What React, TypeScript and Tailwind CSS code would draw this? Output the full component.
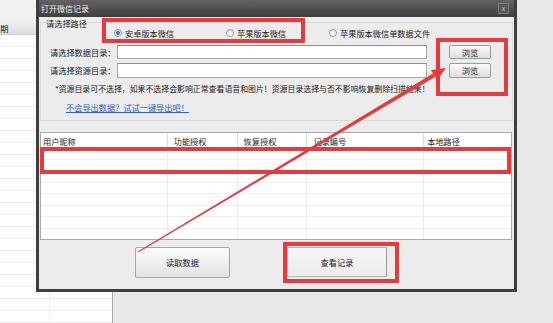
import React from "react";

const FONT = { fontFamily: '"Noto Sans CJK SC", "Noto Sans", sans-serif' };

const COLS = [
  { name: "用户昵称", w: 127, pl: 2 },
  { name: "功能授权", w: 70, pl: 6 },
  { name: "恢复授权", w: 70, pl: 6 },
  { name: "记录编号", w: 117, pl: 6 },
  { name: "本地路径", w: 87, pl: 3 },
];

const ROW_H = [12, 11, 12, 11, 12, 11, 12, 11];

function Radio({ checked, label, w }: { checked?: boolean; label: string; w?: number }) {
  return (
    <div className="flex items-center gap-[3px]" style={w ? { width: w } : undefined}>
      <span className="w-[8px] h-[8px] rounded-full border border-[#9a9a9a] bg-gradient-to-b from-[#e6e6e6] to-white flex items-center justify-center">
        {checked && <span className="w-[4px] h-[4px] rounded-full bg-[#3b6fc9]" />}
      </span>
      <span>{label}</span>
    </div>
  );
}

function BrowseBtn({ h }: { h: number }) {
  return (
    <div
      className="ml-[22px] w-[42px] flex items-center justify-center border border-[#9c9c9c] rounded-[2px] bg-gradient-to-b from-[#fbfbfb] to-[#dedede]"
      style={{ height: h }}
    >
      浏览
    </div>
  );
}

function BackWindow() {
  return (
    <div className="w-[113px] h-full bg-white border-r border-[#a8a8a8] flex flex-col">
      <div className="h-[23px] bg-[#f1f1f1]" />
      <div className="h-[15px] bg-gradient-to-b from-[#f0f0f0] to-[#dedede] border-b border-[#cfcfcf] flex items-center pt-[2px] text-[8.5px] text-[#222]">
        期
      </div>
      <div className="flex-1 flex flex-col">
        {Array.from({ length: 24 }).map((_, i) => (
          <div key={i} className="h-[12px] shrink-0 border-b border-[#ededed] flex">
            <div className="w-[50px] border-r border-[#eeeeee]" />
          </div>
        ))}
      </div>
    </div>
  );
}

function Annotations() {
  // arrow from "读取数据" up to the browse buttons
  const sx = 138, sy = 252, tx = 446, ty = 68;
  const dx = tx - sx, dy = ty - sy;
  const len = Math.hypot(dx, dy);
  const ux = dx / len, uy = dy / len;
  const nx = -uy, ny = ux;
  const bx = tx - 14 * ux, by = ty - 14 * uy;
  const shaft = [
    [sx + 0.5 * nx, sy + 0.5 * ny],
    [bx + 2 * nx, by + 2 * ny],
    [bx - 2 * nx, by - 2 * ny],
    [sx - 0.5 * nx, sy - 0.5 * ny],
  ];
  const head = [
    [tx, ty],
    [bx + 6 * nx, by + 6 * ny],
    [bx - 6 * nx, by - 6 * ny],
  ];
  const pts = (p: number[][]) => p.map((q) => q.join(",")).join(" ");
  return (
    <svg className="absolute inset-0 pointer-events-none" width="553" height="323">
      <g fill="none" stroke="#e53a3f" strokeWidth="4">
        <rect x="104" y="20" width="199" height="21" />
        <rect x="438" y="40" width="68" height="54" />
        <rect x="42" y="149" width="467" height="23" />
        <rect x="285" y="244" width="112" height="37" />
      </g>
      <polygon points={pts(shaft)} fill="#e53a3f" />
      <polygon points={pts(head)} fill="#e53a3f" />
    </svg>
  );
}

export default function App() {
  return (
    <div className="relative w-[553px] h-[323px] overflow-hidden bg-[#e8e8e8] text-[8.2px] text-[#222] leading-none" style={FONT}>
      <BackWindow />

      {/* dialog */}
      <div className="absolute left-[36px] top-0 w-[481px] h-[292px] bg-[#3e3e3e] flex flex-col px-[3px] pb-[3px]">
        <div className="h-[17px] shrink-0 bg-gradient-to-b from-[#626262] to-[#3e3e3e] flex items-center justify-between pl-[2px] pr-[5px]">
          <span className="text-[#eeeeee] text-[8px]">打开微信记录</span>
          <span className="w-[11px] h-[11px] border border-[#7c7c7c] bg-[#555] flex items-center justify-center text-[#ccc] text-[7px]">
            x
          </span>
        </div>

        <div className="flex-1 bg-[#ececec] flex flex-col">
          {/* path group */}
          <div className="mx-[1px] mt-[5px] h-[99px] shrink-0 border border-[#d8d8d8] flex flex-col">
            <div className="-mt-[5px] ml-[4px] px-[1px] w-fit h-[10px] leading-[10px] bg-[#ececec]">请选择路径</div>
            <div className="h-[12px] -mt-[1px] flex items-center pl-[73px]">
              <Radio checked label="安卓版本微信" w={112} />
              <Radio label="苹果版本微信" w={103} />
              <Radio label="苹果版本微信单数据文件" />
            </div>
            <div className="mt-[5px] h-[16px] flex items-center pl-[9px]">
              <span className="w-[67px]">请选择数据目录：</span>
              <div className="w-[310px] h-[14px] bg-white border border-[#a8a8a8] border-t-[#8c8c8c]" />
              <BrowseBtn h={14} />
            </div>
            <div className="mt-[2px] h-[16px] flex items-center pl-[9px]">
              <span className="w-[67px]">请选择资源目录：</span>
              <div className="w-[310px] h-[15px] bg-white border border-[#a8a8a8] border-t-[#8c8c8c]" />
              <BrowseBtn h={15} />
            </div>
            <div className="mt-[5px] h-[12px] flex items-center pl-[14px] text-[7.9px]">
              *资源目录可不选择，如果不选择会影响正常查看语音和图片！资源目录选择与否不影响恢复删除扫描结果！
            </div>
            <div className="mt-[6px] h-[12px] flex items-center pl-[25px]">
              <span className="text-[#2f5fc4] underline">不会导出数据？试试一键导出吧！</span>
            </div>
          </div>

          {/* table */}
          <div className="ml-[1px] mt-[11px] w-[472px] h-[108px] shrink-0 bg-white border border-[#a9a9a9] flex flex-col overflow-hidden">
            <div className="h-[15px] shrink-0 flex border-b border-[#e2e2e2]">
              {COLS.map((c, i) => (
                <div
                  key={c.name}
                  className={`h-full flex items-center pt-[2px] ${i < COLS.length - 1 ? "border-r border-[#dddddd]" : ""}`}
                  style={{ width: c.w, paddingLeft: c.pl }}
                >
                  {c.name}
                </div>
              ))}
            </div>
            {ROW_H.map((h, r) => (
              <div key={r} className="shrink-0 flex border-b border-[#efefef]" style={{ height: h }}>
                {COLS.map((c, i) => (
                  <div
                    key={c.name}
                    className={i < COLS.length - 1 ? "h-full border-r border-[#ebebeb]" : "h-full"}
                    style={{ width: c.w }}
                  />
                ))}
              </div>
            ))}
          </div>

          {/* actions */}
          <div className="mt-[7px] flex items-start pl-[96px]">
            <div className="w-[95px] h-[31px] flex items-center justify-center border border-[#a5a5a5] rounded-[2px] bg-gradient-to-b from-[#fbfbfb] to-[#e3e3e3]">
              读取数据
            </div>
            <div className="ml-[57px] w-[100px] h-[30px] flex items-center justify-center border border-[#b4b4b4] border-r-[#9a9a9a] bg-gradient-to-b from-[#f6f6f6] to-[#ececec]">
              查看记录
            </div>
          </div>
        </div>
      </div>

      <Annotations />
    </div>
  );
}
